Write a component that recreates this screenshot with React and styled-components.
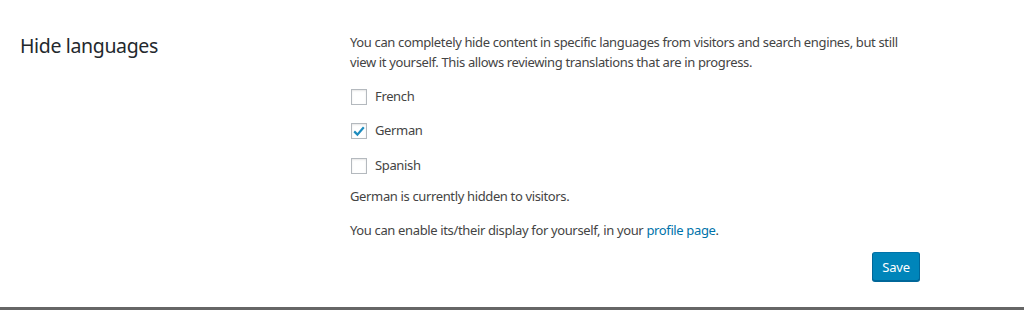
import React, { useState } from "react";
import styled, { createGlobalStyle } from "styled-components";

const Global = createGlobalStyle`
  html, body { margin: 0; padding: 0; background: #fff; }
  body { font-family: "Noto Sans", "Open Sans", sans-serif; color: #444; }
`;

const Page = styled.div`
  width: 1024px;
  height: 310px;
  box-sizing: border-box;
  border-bottom: 3px solid #666;
  display: flex;
  padding: 33px 0 0 20px;
`;

const Heading = styled.h2`
  margin: 0;
  width: 330px;
  font-size: 19.5px;
  letter-spacing: -0.35px;
  font-weight: 400;
  line-height: 26px;
  color: #23282d;
`;

const Column = styled.div`
  width: 570px;
  display: flex;
  flex-direction: column;
  font-size: 13px;
  letter-spacing: -0.36px;
  line-height: 19.5px;
`;

const Para = styled.p`
  margin: ${(p) => p.$top || 0}px 0 0;
  width: 556px;
`;

const Row = styled.label`
  display: flex;
  align-items: center;
  gap: 8px;
  height: 20px;
  margin-top: ${(p) => p.$top}px;
  cursor: pointer;
`;

const Box = styled.span`
  width: 16px;
  height: 16px;
  box-sizing: border-box;
  border: 1px solid #b4b9be;
  background: #fff;
  box-shadow: inset 0 1px 2px rgba(0, 0, 0, 0.1);
  display: flex;
  align-items: center;
  justify-content: center;
  margin-left: 1px;
`;

const Link = styled.a`
  color: #0073aa;
  text-decoration: none;
`;

const Button = styled.button`
  align-self: flex-end;
  margin-top: 12px;
  width: 48px;
  height: 29px;
  box-sizing: border-box;
  background: #0085ba;
  border: 1px solid #0073aa;
  border-color: #0073aa #006799 #006799;
  border-radius: 3px;
  box-shadow: 0 1px 0 #006799;
  color: #fff;
  font-family: inherit;
  font-size: 13px;
  letter-spacing: -0.2px;
  padding: 0;
  cursor: pointer;
`;

const Check = () => (
  <svg width="14" height="14" viewBox="0 0 14 14">
    <path d="M2.2 7.4 L5.4 10.6 L11.8 3.2" fill="none" stroke="#1e8cbe" strokeWidth="2.2" />
  </svg>
);

const langs = [
  { name: "French", top: 15 },
  { name: "German", top: 14 },
  { name: "Spanish", top: 15 },
];

export default function App() {
  const [checked, setChecked] = useState({ German: true });
  return (
    <>
      <Global />
      <Page>
        <Heading>Hide languages</Heading>
        <Column>
          <Para>
            You can completely hide content in specific languages from visitors and search engines, but still view it
            yourself. This allows reviewing translations that are in progress.
          </Para>
          {langs.map((l) => (
            <Row key={l.name} $top={l.top} onClick={() => setChecked((c) => ({ ...c, [l.name]: !c[l.name] }))}>
              <Box>{checked[l.name] && <Check />}</Box>
              {l.name}
            </Row>
          ))}
          <Para $top={11}>German is currently hidden to visitors.</Para>
          <Para $top={14}>
            You can enable its/their display for yourself, in your <Link href="#">profile page</Link>.
          </Para>
          <Button>Save</Button>
        </Column>
      </Page>
    </>
  );
}
